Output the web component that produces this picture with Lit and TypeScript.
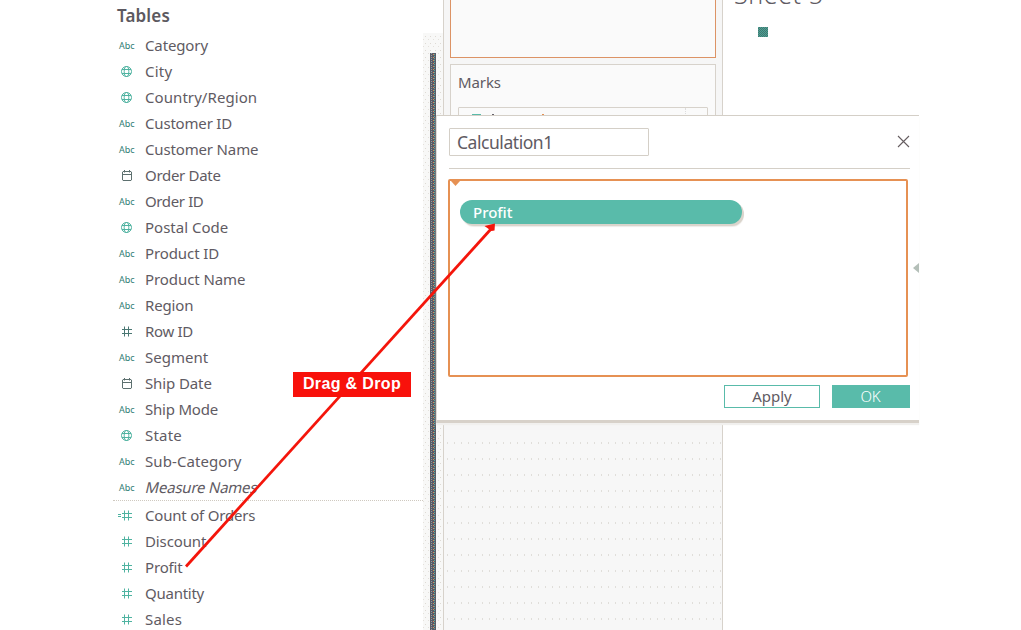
import { LitElement, html, css, svg } from 'lit';
import { customElement, property } from 'lit/decorators.js';

type Kind = 'abc' | 'globe' | 'date' | 'hash' | 'count';
interface Field { kind: Kind; label: string; tone?: 'dark'; italic?: boolean; width: number; }

const dimensions: Field[] = [
  { kind: 'abc', label: 'Category', width: 63 },
  { kind: 'globe', label: 'City', width: 27 },
  { kind: 'globe', label: 'Country/Region', width: 112 },
  { kind: 'abc', label: 'Customer ID', width: 87 },
  { kind: 'abc', label: 'Customer Name', width: 113 },
  { kind: 'date', label: 'Order Date', width: 76 },
  { kind: 'abc', label: 'Order ID', width: 58 },
  { kind: 'globe', label: 'Postal Code', width: 83 },
  { kind: 'abc', label: 'Product ID', width: 74 },
  { kind: 'abc', label: 'Product Name', width: 100 },
  { kind: 'abc', label: 'Region', width: 48 },
  { kind: 'hash', label: 'Row ID', tone: 'dark', width: 48 },
  { kind: 'abc', label: 'Segment', width: 63 },
  { kind: 'date', label: 'Ship Date', width: 67 },
  { kind: 'abc', label: 'Ship Mode', width: 73 },
  { kind: 'globe', label: 'State', width: 37 },
  { kind: 'abc', label: 'Sub-Category', width: 96 },
  { kind: 'abc', label: 'Measure Names', italic: true, width: 112 },
];

const measures: Field[] = [
  { kind: 'count', label: 'Count of Orders', width: 110 },
  { kind: 'hash', label: 'Discount', width: 61 },
  { kind: 'hash', label: 'Profit', width: 38 },
  { kind: 'hash', label: 'Quantity', width: 59 },
  { kind: 'hash', label: 'Sales', width: 37 },
];

const globe = svg`<g fill="none" stroke="#4fb3a1" stroke-width="1"><circle cx="8.5" cy="8.5" r="5"/><ellipse cx="8.5" cy="8.5" rx="2.3" ry="5"/><path d="M4 6.5h9M4 10.5h9"/></g>`;
const calendar = svg`<path d="M5 4.500h8l.5.5v8l-.5.5h-8l-.5-.5v-8zM4.500 7.500h9M6.500 3v2.500M11.500 3v2.500" fill="none" stroke="#5d706f"/>`;
const hash = (c: string) => svg`<path d="M6.500 3.500v10M10.500 3.500v10M4 6.500h10M4 10.500h10" fill="none" stroke=${c}/>`;

@customElement('field-row')
export class FieldRow extends LitElement {
  @property({ attribute: false }) field!: Field;

  static styles = css`
    :host { display: flex; align-items: center; height: 26px; }
    .icon { width: 17px; height: 18px; flex: none; margin: 0 10px 0 5px; }
    .abc { width: 17px; flex: none; margin: 0 9px 0 6px; font: 400 9px/18px "Noto Sans", sans-serif; color: #2f7d73; white-space: nowrap; }
    .label { font: 400 15px/20px "Noto Sans", sans-serif; color: #5f5b63; white-space: nowrap; flex: none; margin-bottom: 2px; }
    .italic { transform: skewX(-13deg); margin-left: 1px; }
  `;

  /* Spreads the label over its nominal width by tracking. */
  updated() {
    const el = this.renderRoot.querySelector<HTMLElement>('.label')!;
    el.style.letterSpacing = '0px';
    const gap = (this.field.width - el.offsetWidth) / this.field.label.length;
    el.style.letterSpacing = `${gap.toFixed(3)}px`;
  }

  render() {
    const f = this.field;
    const icon = f.kind === 'abc' ? html`<span class="abc">Abc</span>` : html`
      <svg class="icon" viewBox="0 0 17 18">
        ${f.kind === 'globe' ? globe : f.kind === 'date' ? calendar : hash(f.tone ? '#4a7773' : '#4fb3a1')}
        ${f.kind === 'count' ? svg`<path d="M0 7.500h3M0 9.500h3" stroke="#4fb3a1"/>` : ''}
      </svg>`;
    return html`${icon}<span class="label ${f.italic ? 'italic' : ''}">${f.label}</span>`;
  }
}

@customElement('calc-dialog')
export class CalcDialog extends LitElement {
  static styles = css`
    :host { display: flex; flex-direction: column; box-sizing: border-box; background: #fff; border-top: 1px solid #d4cfc7; border-left: 1px solid #e0ddd8; border-bottom: 3px solid #d7d1c9; box-shadow: 0 2px 1px #f1f0ee; font-family: "Noto Sans", sans-serif; color: #5f5b63; padding: 12px 9px 0 11px; }
    .head { display: flex; justify-content: space-between; align-items: flex-start; height: 40px; border-bottom: 1px solid #d4cfc7; margin-left: 1px; }
    .name { box-sizing: border-box; width: 200px; height: 28px; border: 1px solid #d4cfc7; border-radius: 1px; font-size: 17.500px; line-height: 27px; padding-left: 7px; letter-spacing: -.45px; }
    .close { width: 13px; height: 13px; margin-top: 7px; }
    .editor { position: relative; box-sizing: border-box; height: 198px; width: 460px; margin-top: 10px; border: 2px solid #e69153; border-radius: 2px; padding: 19px 10px; }
    .marker { position: absolute; left: 1px; top: 0; width: 9px; height: 5px; }
    .pill { width: 282px; height: 24px; box-sizing: border-box; border-radius: 12px; background: #59bbaa; box-shadow: 2px 2px 0 #dad4cc, 2px 3px 1px #eeece9; color: #fff; font: 500 15px/24px "Noto Sans", sans-serif; letter-spacing: 0; padding-left: 13px; }
    .actions { display: flex; justify-content: flex-end; gap: 12px; margin-top: 8px; }
    .btn { box-sizing: border-box; height: 23px; font-size: 15px; line-height: 21px; text-align: center; }
    .apply { width: 96px; border: 1px solid #59bbaa; }
    .ok { width: 78px; background: #59bbaa; color: #fff; font-weight: 300; line-height: 23px; letter-spacing: -.3px; padding-right: 1px; }
  `;
  render() {
    return html`
      <div class="head">
        <div class="name">Calculation1</div>
        <svg class="close" viewBox="0 0 13 13"><path d="M1 1 12 12M12 1 1 12" stroke="#655d60" stroke-width="1.100"/></svg>
      </div>
      <div class="editor">
        <svg class="marker" viewBox="0 0 9 5"><path d="M0 0h9L4.500 5z" fill="#e69153"/></svg>
        <div class="pill">Profit</div>
      </div>
      <div class="actions"><div class="btn apply">Apply</div><div class="btn ok">OK</div></div>`;
  }
}

@customElement('app-root')
export class AppRoot extends LitElement {
  static styles = css`
    :host { display: block; position: relative; width: 1021px; height: 630px; overflow: hidden; background: #fff; font-family: "Noto Sans", sans-serif; color: #5f5b63; }
    .workspace { display: grid; grid-template-columns: 310px 20px 280px 196px; padding-left: 113px; height: 630px; }
    .title { font: 600 17px/20px "Noto Sans", sans-serif; height: 33px; box-sizing: border-box; padding: 6px 0 0 4px; letter-spacing: .15px; color: #5c5960; }
    .measures { border-top: 1px dotted #cfc9c0; margin-top: -1px; padding-top: 2px; }
    .track { margin-top: 33px; padding: 20px 0 0 7px; background-color: #f8f8f7; background-image: radial-gradient(circle, #dedad4 .6px, transparent .8px), radial-gradient(circle, #e4e1dc .6px, transparent .8px); background-size: 5px 7px, 5px 7px; background-position: 0 0, 3px 3px; }
    .thumb { width: 6px; height: 577px; background-color: #5b5b67; background-image: repeating-linear-gradient(0deg, transparent 0 1px, #54a99b 1px 2px), repeating-linear-gradient(0deg, transparent 0 2px, #d68b56 2px 3px), repeating-linear-gradient(0deg, #8d9f9f 0 1px, #5b5b67 1px 2px); background-size: 1px 100%; background-position: 4px 0, 3px 0, 1px 0; background-repeat: no-repeat; }
    .cards { background-color: #f7f7f7; background-image: radial-gradient(circle, #e0deda .6px, transparent .8px); background-size: 7px 16px; background-position: 0 3px; border: solid #d7d2cb; border-width: 0 1px; padding: 0 6px; }
    .top { background: #f6f6f6; margin: 0 -6px; padding: 0 6px; height: 430px; }
    .shelf { box-sizing: border-box; height: 58px; border: 1px solid #dc9365; border-top: 0; background: #fafafa; }
    .marks { box-sizing: border-box; margin-top: 6px; height: 320px; border: 1px solid #d7d2cb; background: #fafafa; padding: 7px 7px; }
    .marks-title { font-size: 15px; line-height: 20px; letter-spacing: -.1px; }
    .select { display: flex; align-items: flex-start; margin-top: 15px; height: 30px; border: 1px solid #d7d2cb; border-radius: 1px; }
    .glimpse { flex: 1; height: 8px; }
    .arrow { width: 21px; height: 30px; border-left: 1px dotted #ddd; }
    .sheet { padding-left: 11px; }
    .sheet-name { height: 9px; font: 300 25px/30px "Noto Sans", sans-serif; letter-spacing: .6px; display: flex; align-items: flex-end; white-space: nowrap; }
    .mark { width: 10px; height: 10px; margin: 18px 0 0 24px; background: repeating-conic-gradient(#45746f 0 25%, #49a496 0 50%) 0 0 / 2px 2px; }
    .dialog { position: absolute; left: 436px; top: 115px; width: 483px; height: 308px; }
    .handle { position: absolute; left: 913px; top: 263px; width: 6px; height: 10px; }
    .annotation { position: absolute; left: 0; top: 0; width: 1021px; height: 630px; }
    .tag { position: absolute; left: 293px; top: 372px; width: 118px; height: 25px; background: #f8110b; color: #fff; font: 700 16px/24px "Liberation Sans", sans-serif; letter-spacing: .35px; text-align: center; white-space: nowrap; }
  `;
  render() {
    return html`
      <div class="workspace">
        <section>
          <div class="title">Tables</div>
          ${dimensions.map(f => html`<field-row .field=${f}></field-row>`)}
          <div class="measures">${measures.map(f => html`<field-row .field=${f}></field-row>`)}</div>
        </section>
        <div class="track"><div class="thumb"></div></div>
        <section class="cards">
          <div class="top">
            <div class="shelf"></div>
            <div class="marks">
              <div class="marks-title">Marks</div>
              <div class="select">
                <svg class="glimpse" viewBox="0 0 226 8" preserveAspectRatio="xMinYMin meet"><path d="M13 6.500h9" stroke="#59bbaa"/><path d="M33 6.500h2" stroke="#66626a"/><path d="M83 6.500h2" stroke="#e69153"/></svg>
                <div class="arrow"></div>
              </div>
            </div>
          </div>
        </section>
        <section class="sheet">
          <div class="sheet-name">Sheet 5</div>
          <div class="mark"></div>
        </section>
      </div>
      <calc-dialog class="dialog"></calc-dialog>
      <svg class="handle" viewBox="0 0 6 10"><path d="M6 0v10L0 5z" fill="#b4bfb8"/></svg>
      <svg class="annotation" viewBox="0 0 1021 630">
        <path d="M186 566.500 491 229" stroke="#f4150b" stroke-width="2.800"/>
        <path d="M484.500 226 495 223.500 494.500 230.500 491.500 231z" fill="#f4150b"/>
      </svg>
      <div class="tag">Drag &amp; Drop</div>`;
  }
}
